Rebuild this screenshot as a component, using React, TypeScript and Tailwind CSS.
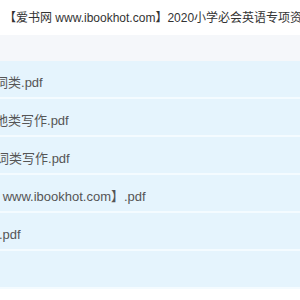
const ROWS = [
  { lead: "词", text: "类.pdf", shift: "-ml-[5px]" },
  { lead: "地", text: "类写作.pdf", shift: "-ml-[5px]" },
  { lead: "词", text: "类写作.pdf", shift: "-ml-[4px]" },
  { lead: "网", text: " www.ibookhot.com】.pdf", shift: "-ml-[14px]" },
  { lead: "", text: ".pdf", shift: "-ml-[1px]" },
  { lead: "", text: "", shift: "" },
];

export default function App() {
  return (
    <div className="w-[300px] h-[300px] bg-white overflow-hidden font-['Liberation_Sans','Noto_Sans_CJK_SC',sans-serif]">
      {/* Title */}
      <div className="h-[35px] flex items-center pl-[4px] whitespace-nowrap text-[12px] text-[#333]">
        【爱书网 www.ibookhot.com】2020小学必会英语专项资料
      </div>

      {/* Header band */}
      <div className="h-[26px] bg-[#f5f7fa]" />

      {/* File rows */}
      <div className="flex flex-col">
        {ROWS.map((r, i) => (
          <div
            key={i}
            className="h-[38px] bg-[#e5f4fd] border-b-2 border-[#f4fbff] flex items-center pt-[7px] overflow-hidden whitespace-nowrap text-[13px] text-[#555]"
          >
            <span className={r.shift}>
              {r.lead}
              {r.text}
            </span>
          </div>
        ))}
      </div>
    </div>
  );
}
